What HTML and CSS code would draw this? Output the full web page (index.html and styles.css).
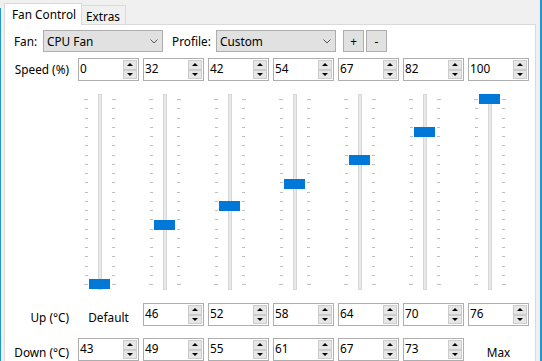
FILE: index.html
```html
<!DOCTYPE html>
<html>
<head>
<meta charset="utf-8">
<link rel="stylesheet" href="styles.css">
</head>
<body>
<div class="frame">
  <div class="tabs">
    <div class="tab active">Fan Control</div>
    <div class="tab">Extras</div>
  </div>
  <div class="panel">
    <div class="toprow">
      <span class="lbl lbl-fan">Fan:</span>
      <div class="combo"><span>CPU Fan</span><svg class="chev" width="8" height="5" viewBox="0 0 8 5"><polyline points="0.5,0.5 4,4 7.5,0.5" fill="none" stroke="#555" stroke-width="1"/></svg></div>
      <span class="lbl lbl-profile">Profile:</span>
      <div class="combo"><span>Custom</span><svg class="chev" width="8" height="5" viewBox="0 0 8 5"><polyline points="0.5,0.5 4,4 7.5,0.5" fill="none" stroke="#555" stroke-width="1"/></svg></div>
      <div class="btn btn-plus">+</div>
      <div class="btn btn-minus">-</div>
    </div>

    <div class="grow row-speed">
      <div class="rlabel">Speed (%)</div>
      <div class="spin"><span class="val">0</span><span class="arrows"><i class="up"></i><i class="down"></i></span></div>
      <div class="spin"><span class="val">32</span><span class="arrows"><i class="up"></i><i class="down"></i></span></div>
      <div class="spin"><span class="val">42</span><span class="arrows"><i class="up"></i><i class="down"></i></span></div>
      <div class="spin"><span class="val">54</span><span class="arrows"><i class="up"></i><i class="down"></i></span></div>
      <div class="spin"><span class="val">67</span><span class="arrows"><i class="up"></i><i class="down"></i></span></div>
      <div class="spin"><span class="val">82</span><span class="arrows"><i class="up"></i><i class="down"></i></span></div>
      <div class="spin"><span class="val">100</span><span class="arrows"><i class="up"></i><i class="down"></i></span></div>
    </div>

    <div class="grow row-sliders">
      <div></div>
      <div class="slider"><div class="ticks tl"><b></b><b></b><b></b><b></b><b></b><b></b><b></b><b></b><b></b><b></b><b></b><b></b><b></b><b></b><b></b><b></b><b></b><b></b><b></b><b></b><b></b></div><div class="track"></div><div class="ticks tr"><b></b><b></b><b></b><b></b><b></b><b></b><b></b><b></b><b></b><b></b><b></b><b></b><b></b><b></b><b></b><b></b><b></b><b></b><b></b><b></b><b></b></div><div class="thumb" style="top:185px"></div></div>
      <div class="slider"><div class="ticks tl"><b></b><b></b><b></b><b></b><b></b><b></b><b></b><b></b><b></b><b></b><b></b><b></b><b></b><b></b><b></b><b></b><b></b><b></b><b></b><b></b><b></b></div><div class="track"></div><div class="ticks tr"><b></b><b></b><b></b><b></b><b></b><b></b><b></b><b></b><b></b><b></b><b></b><b></b><b></b><b></b><b></b><b></b><b></b><b></b><b></b><b></b><b></b></div><div class="thumb" style="top:126px"></div></div>
      <div class="slider"><div class="ticks tl"><b></b><b></b><b></b><b></b><b></b><b></b><b></b><b></b><b></b><b></b><b></b><b></b><b></b><b></b><b></b><b></b><b></b><b></b><b></b><b></b><b></b></div><div class="track"></div><div class="ticks tr"><b></b><b></b><b></b><b></b><b></b><b></b><b></b><b></b><b></b><b></b><b></b><b></b><b></b><b></b><b></b><b></b><b></b><b></b><b></b><b></b><b></b></div><div class="thumb" style="top:107px"></div></div>
      <div class="slider"><div class="ticks tl"><b></b><b></b><b></b><b></b><b></b><b></b><b></b><b></b><b></b><b></b><b></b><b></b><b></b><b></b><b></b><b></b><b></b><b></b><b></b><b></b><b></b></div><div class="track"></div><div class="ticks tr"><b></b><b></b><b></b><b></b><b></b><b></b><b></b><b></b><b></b><b></b><b></b><b></b><b></b><b></b><b></b><b></b><b></b><b></b><b></b><b></b><b></b></div><div class="thumb" style="top:85px"></div></div>
      <div class="slider"><div class="ticks tl"><b></b><b></b><b></b><b></b><b></b><b></b><b></b><b></b><b></b><b></b><b></b><b></b><b></b><b></b><b></b><b></b><b></b><b></b><b></b><b></b><b></b></div><div class="track"></div><div class="ticks tr"><b></b><b></b><b></b><b></b><b></b><b></b><b></b><b></b><b></b><b></b><b></b><b></b><b></b><b></b><b></b><b></b><b></b><b></b><b></b><b></b><b></b></div><div class="thumb" style="top:61px"></div></div>
      <div class="slider"><div class="ticks tl"><b></b><b></b><b></b><b></b><b></b><b></b><b></b><b></b><b></b><b></b><b></b><b></b><b></b><b></b><b></b><b></b><b></b><b></b><b></b><b></b><b></b></div><div class="track"></div><div class="ticks tr"><b></b><b></b><b></b><b></b><b></b><b></b><b></b><b></b><b></b><b></b><b></b><b></b><b></b><b></b><b></b><b></b><b></b><b></b><b></b><b></b><b></b></div><div class="thumb" style="top:33px"></div></div>
      <div class="slider"><div class="ticks tl"><b></b><b></b><b></b><b></b><b></b><b></b><b></b><b></b><b></b><b></b><b></b><b></b><b></b><b></b><b></b><b></b><b></b><b></b><b></b><b></b><b></b></div><div class="track"></div><div class="ticks tr"><b></b><b></b><b></b><b></b><b></b><b></b><b></b><b></b><b></b><b></b><b></b><b></b><b></b><b></b><b></b><b></b><b></b><b></b><b></b><b></b><b></b></div><div class="thumb" style="top:0px"></div></div>
    </div>

    <div class="grow row-up">
      <div class="rlabel low">Up (°C)</div>
      <div class="clabel low">Default</div>
      <div class="spin"><span class="val">46</span><span class="arrows"><i class="up"></i><i class="down"></i></span></div>
      <div class="spin"><span class="val">52</span><span class="arrows"><i class="up"></i><i class="down"></i></span></div>
      <div class="spin"><span class="val">58</span><span class="arrows"><i class="up"></i><i class="down"></i></span></div>
      <div class="spin"><span class="val">64</span><span class="arrows"><i class="up"></i><i class="down"></i></span></div>
      <div class="spin"><span class="val">70</span><span class="arrows"><i class="up"></i><i class="down"></i></span></div>
      <div class="spin"><span class="val">76</span><span class="arrows"><i class="up"></i><i class="down"></i></span></div>
    </div>

    <div class="grow row-down">
      <div class="rlabel low">Down (°C)</div>
      <div class="spin"><span class="val">43</span><span class="arrows"><i class="up"></i><i class="down"></i></span></div>
      <div class="spin"><span class="val">49</span><span class="arrows"><i class="up"></i><i class="down"></i></span></div>
      <div class="spin"><span class="val">55</span><span class="arrows"><i class="up"></i><i class="down"></i></span></div>
      <div class="spin"><span class="val">61</span><span class="arrows"><i class="up"></i><i class="down"></i></span></div>
      <div class="spin"><span class="val">67</span><span class="arrows"><i class="up"></i><i class="down"></i></span></div>
      <div class="spin"><span class="val">73</span><span class="arrows"><i class="up"></i><i class="down"></i></span></div>
      <div class="clabel low">Max</div>
    </div>
  </div>
</div>
</body>
</html>
```
FILE: styles.css
```css
* { box-sizing: border-box; }
html, body { margin: 0; height: 100%; }
body {
  background:
    linear-gradient(#2196c9, #2196c9) 0 8px / 1px 100% no-repeat,
    linear-gradient(#2196c9, #2196c9) 540px 0 / 2px 100% no-repeat,
    #f0f0f0;
  font-family: "Noto Sans", "Open Sans", sans-serif;
  font-size: 11.8px;
  color: #000;
  overflow: hidden;
}
.frame { padding: 3px 0 0 4px; width: 540px; }

.tabs { display: flex; align-items: flex-end; height: 21px; }
.tab {
  border: 1px solid #d9d9d9;
  border-bottom: none;
  display: flex;
  align-items: center;
}
.tab.active {
  background: #fff;
  width: 78px;
  height: 22px;
  margin-bottom: -1px;
  padding-left: 7px;
  padding-bottom: 1px;
  position: relative;
  z-index: 1;
}
.tab:not(.active) {
  background: #f0f0f0;
  width: 45px;
  height: 19px;
  margin-left: -1px;
  padding-left: 4px;
  padding-top: 2px;
}

.panel {
  background: #fff;
  border: 1px solid #d9d9d9;
  border-bottom: none;
  width: 532px;
  height: 337px;
  padding-top: 5px;
}

.toprow { display: flex; align-items: center; height: 22px; padding-left: 9px; }
.lbl-fan { width: 29px; }
.lbl-profile { width: 44px; margin-left: 9px; }
.combo {
  width: 120px;
  height: 22px;
  background: #e1e1e1;
  border: 1px solid #adadad;
  display: flex;
  align-items: center;
  padding-left: 3px;
}
.chev { margin-left: auto; margin-right: 4px; }
.btn {
  width: 21px;
  height: 22px;
  background: #e1e1e1;
  border: 1px solid #adadad;
  display: flex;
  align-items: center;
  justify-content: center;
}
.btn-plus { margin-left: 7px; }
.btn-minus { margin-left: 2px; }

.grow {
  display: grid;
  grid-template-columns: 69px repeat(7, 61px);
  column-gap: 4px;
}
.row-speed { margin-top: 6px; }
.row-sliders { margin-top: 13px; }
.row-up { margin-top: 13px; }
.row-down { margin-top: 9px; }

.rlabel { text-align: right; padding-right: 5px; line-height: 23px; white-space: nowrap; }
.clabel { text-align: center; line-height: 23px; }
.low { padding-top: 3px; }

.spin {
  height: 23px;
  border: 1px solid #adadad;
  background: #fff;
  display: flex;
}
.val { padding-left: 1px; line-height: 18px; }
.arrows {
  margin-left: auto;
  width: 16px;
  display: flex;
  flex-direction: column;
  padding: 1px;
}
.arrows i {
  flex: 1;
  background: #e6e6e6;
  border: 1px solid #cccccc;
  display: flex;
  align-items: center;
  justify-content: center;
}
.arrows i::after {
  content: "";
  width: 0;
  height: 0;
  border-left: 3px solid transparent;
  border-right: 3px solid transparent;
}
.arrows .up::after { border-bottom: 3px solid #000; }
.arrows .down::after { border-top: 3px solid #000; }

.slider { position: relative; height: 196px; display: flex; }
.ticks {
  width: 4px;
  margin: 5px 0 5px 0;
  display: flex;
  flex-direction: column;
  justify-content: space-between;
}
.ticks b { display: block; height: 1px; width: 3px; background: #c0c0c0; }
.ticks b:first-child, .ticks b:last-child { width: 4px; }
.tl { margin-left: 6px; align-items: flex-end; }
.tr { margin-left: 10px; align-items: flex-start; }
.track {
  width: 4px;
  margin-left: 10px;
  background: #e7eae7;
  border: 1px solid #d6d6d6;
}
.thumb {
  position: absolute;
  left: 11px;
  width: 21px;
  height: 10px;
  background: #0078d7;
}
```
